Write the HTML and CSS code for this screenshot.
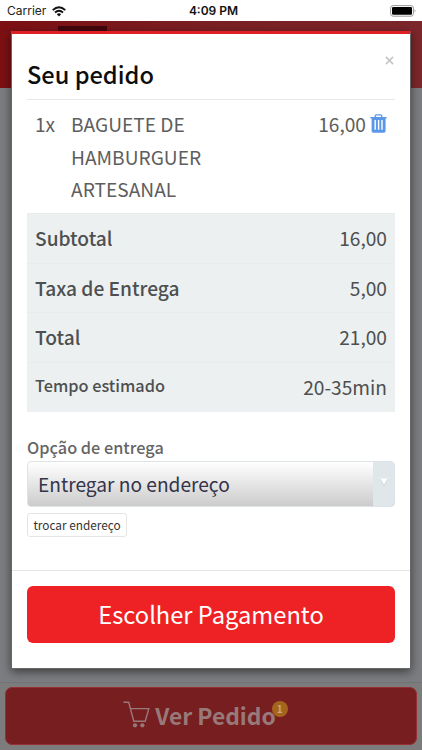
FILE: index.html
```html
<!DOCTYPE html>
<html lang="pt-BR">
<head>
<meta charset="utf-8">
<title>Seu pedido</title>
<link rel="stylesheet" href="styles.css">
</head>
<body>
<div class="screen">
  <header class="status">
    <div class="carrier"><span>Carrier</span>
      <svg width="14" height="11" viewBox="0 0 14 11"><g fill="none" stroke="#111" stroke-width="1.9"><path d="M.7 4.1Q7-1.7 13.3 4.1"/><path d="M3 6.5Q7 2.9 11 6.5"/></g><path d="M4.8 8.2Q7 6.3 9.2 8.2L7 10.5Z" fill="#111"/></svg>
    </div>
    <div class="clock">4:09 PM</div>
    <svg class="battery" width="27" height="12" viewBox="0 0 27 12"><rect x=".6" y=".6" width="22.8" height="10.6" rx="2.5" fill="#fff" stroke="#999"/><rect x="2" y="2" width="20" height="7.8" rx="1.2"/><path d="M24.7 4q1.7 1.9 0 3.8z" fill="#888"/></svg>
  </header>
  <div class="page">
    <div class="topbar"><div class="brand"></div></div>
    <div class="content"></div>
    <footer class="bottom">
      <div class="view-order">
        <svg width="27" height="27" viewBox="0 0 27 27"><g fill="none" stroke="#98797a" stroke-width="1.4"><path d="M.5 1.3H5.7L10.8 20.2H22.2L25.8 7.6H7.6"/></g><circle cx="12" cy="24.3" r="2.1" fill="#98797a"/><circle cx="19.4" cy="24.3" r="2.1" fill="#98797a"/></svg>
        <span class="view-label">Ver Pedido<span class="badge">1</span></span>
      </div>
    </footer>
  </div>
  <section class="modal">
    <div class="modal-body">
      <div class="modal-head"><h1>Seu pedido</h1>
        <svg class="close" width="9" height="9" viewBox="0 0 9 9"><path d="M.9.9 8.1 8.1M8.1.9.9 8.1" stroke="#c4c4c4" stroke-width="1.5"/></svg>
      </div>
      <div class="item">
        <span class="qty">1x</span>
        <span class="name">BAGUETE DE<br>HAMBURGUER<br>ARTESANAL</span>
        <span class="price">16,00</span>
        <svg class="trash" width="17" height="19" viewBox="0 0 17 19"><path d="M5.3 3V1.8Q5.3.9 6.2.9H10.8Q11.7.9 11.7 1.8V3" fill="none" stroke="#5c98e8" stroke-width="1.3"/><path d="M.4 3H16.6V4.5H15.6V16.8Q15.6 18.7 13.8 18.7H3.4Q1.6 18.7 1.6 16.8V4.5H.4Z" fill="#5c98e8"/><path d="M5.2 6V15.7M8.6 6V15.7M12 6V15.7" stroke="#fff" stroke-width="1.4"/></svg>
      </div>
      <div class="totals">
        <div class="row"><b>Subtotal</b><span>16,00</span></div>
        <div class="row"><b>Taxa de Entrega</b><span>5,00</span></div>
        <div class="row"><b>Total</b><span>21,00</span></div>
        <div class="row last"><b class="small">Tempo estimado</b><span>20-35min</span></div>
      </div>
      <div class="label">Opção de entrega</div>
      <div class="select"><span class="value">Entregar no endereço</span>
        <span class="arrow"><svg width="8" height="8" viewBox="0 0 8 8"><path d="M0 .5H8L4 7.5Z" fill="#fff"/><path d="M.5 1.3 4 7.5 7.5 1.3" fill="none" stroke="#bcc8cc" stroke-width=".6"/></svg></span>
      </div>
      <div class="change">trocar endereço</div>
    </div>
    <div class="modal-foot"><div class="pay">Escolher Pagamento</div></div>
  </section>
</div>
</body>
</html>
```
FILE: styles.css
```css
* { box-sizing: border-box; }
body { margin: 0; font-family: "Noto Sans CJK SC", "Open Sans", sans-serif; }
h1 { margin: 0; }
svg { display: block; flex: none; }
.screen { position: relative; width: 422px; height: 750px; overflow: hidden; display: flex; flex-direction: column; }
.status { height: 21px; flex: none; background: #fff; display: grid; grid-template-columns: 1fr auto 1fr; align-items: center; padding: 0 5px 0 7px; font: 12px/22px Inter, sans-serif; color: #222; }
.carrier { display: flex; align-items: center; gap: 6px; }
.clock { font-weight: 600; font-size: 12px; color: #111; padding-left: 3px; }
.battery { justify-self: end; }
.page { flex: 1; display: flex; flex-direction: column; background: #7c7d80; }
.topbar { height: 67px; background: linear-gradient(90deg, #7c1013, #7a2024 50%, #7c272b); padding-top: 5px; }
.brand { width: 49px; height: 6px; margin-left: 58px; background: #42070b; }
.content { flex: 1; }
.bottom { height: 68px; border-top: 1px solid #737476; background: #7c7c7d; padding: 4px 5px 6px; }
.view-order { height: 58px; border: 1px solid #963035; border-radius: 7px; background: #771e20; color: #98797a; display: flex; align-items: center; justify-content: center; gap: 5px; padding-right: 23px; }
.view-order svg { margin-top: -4px; }
.view-label { position: relative; font-size: 22.8px; font-weight: 700; line-height: 56px; white-space: nowrap; }
.badge { position: absolute; right: -12px; top: 13px; width: 16px; height: 16px; border-radius: 50%; background: #a5651e; color: #c6a779; font-size: 10px; line-height: 16px; text-align: center; }
.modal { position: absolute; left: 11px; top: 31px; width: 400px; height: 638px; background: #fff; border: 1px solid #666; border-top: 3px solid #df2025; box-shadow: 0 3px 9px rgba(0,0,0,.5); display: flex; flex-direction: column; }
.modal-body { flex: 1; padding: 0 15px; }
.modal-head { height: 66px; border-bottom: 1px solid #e8e8e8; display: flex; justify-content: space-between; padding-top: 22px; }
h1 { font-size: 23.6px; line-height: 36px; font-weight: 500; color: #0d0d0d; }
.close { margin: 0 1px 0 0; }
.item { height: 113px; padding: 8px 8px 0; display: flex; color: #5e5e5e; font-size: 19.15px; line-height: 32.5px; }
.qty { width: 36px; }
.name { flex: 1; }
.trash { margin: 6px 0 0 4px; }
.totals { height: 199px; background: #ecf0f1; display: flex; flex-direction: column; }
.row { flex: 1; display: flex; justify-content: space-between; align-items: center; padding: 0 8px; border-top: 1px solid #e9eced; color: #4d4f50; font-size: 19.15px; line-height: 30px; }
.row b { font-weight: 500; }
.row.last { padding-bottom: 1px; }
.row .small { font-size: 16.3px; padding-bottom: 4px; }
.label { margin-top: 22px; height: 27px; line-height: 26px; font-size: 16.3px; font-weight: 500; color: #656565; }
.select { height: 46px; border: 1px solid #dce4e7; border-radius: 4px; background: linear-gradient(#fff, #ccc); display: flex; overflow: hidden; }
.value { flex: 1; padding-left: 10px; font-size: 19.15px; line-height: 44px; color: #34344a; }
.arrow { width: 21px; background: #dfe7ea; display: flex; justify-content: center; padding-top: 16px; }
.change { width: 100px; height: 24px; margin-top: 6px; border: 1px solid #e5e5e5; border-radius: 3px; font-size: 11.8px; line-height: 21px; text-align: center; color: #333; white-space: nowrap; }
.modal-foot { height: 98px; border-top: 1px solid #e5e5e5; padding: 15px 15px 0; }
.pay { height: 57px; border-radius: 6px; background: #ee2224; color: #fff; font-size: 23.7px; line-height: 56px; text-align: center; }
```
